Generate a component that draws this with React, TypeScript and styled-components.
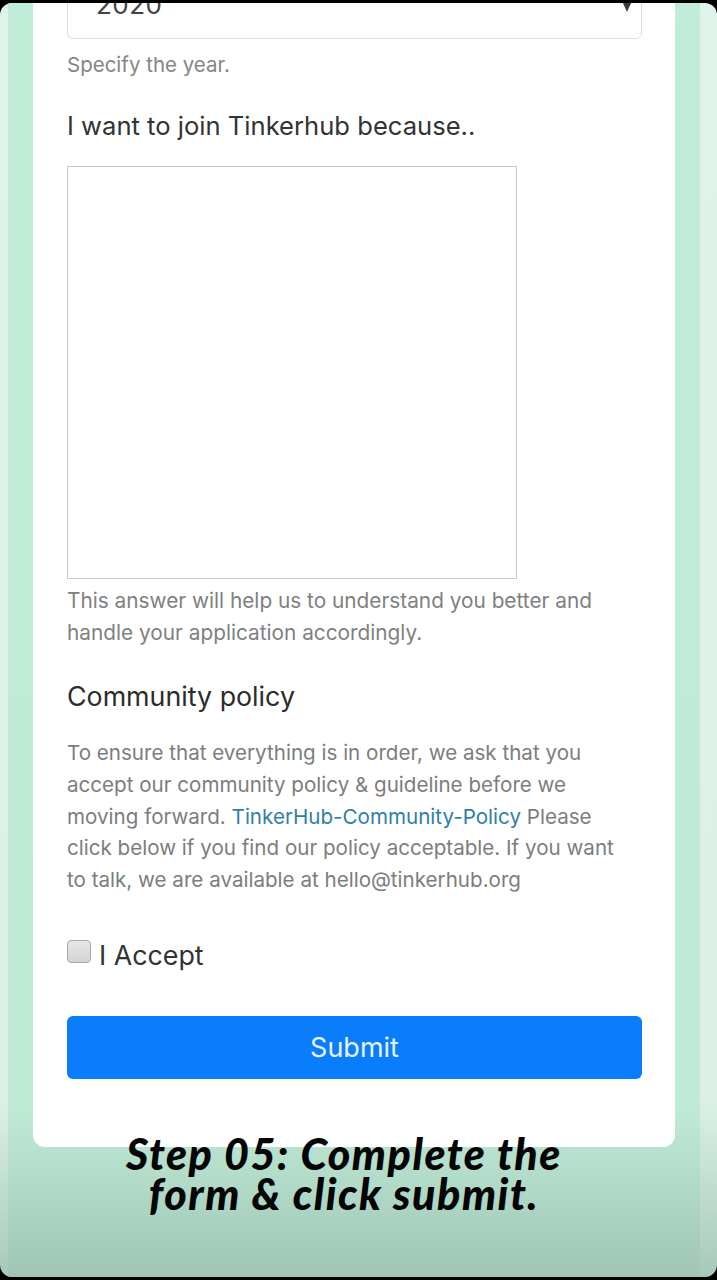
import styled, { createGlobalStyle } from 'styled-components';

const GlobalStyle = createGlobalStyle`
  html, body {
    margin: 0;
    padding: 0;
    background: #000;
  }
  * {
    box-sizing: border-box;
  }
`;

const App = () => {
  return (
    <>
      <GlobalStyle />
      <Screen>
        <Panel>
          <Card>
            <SelectBox>
              <SelectValue>2020</SelectValue>
              <Caret />
            </SelectBox>
            <HelpText>Specify the year.</HelpText>

            <FieldLabel>I want to join Tinkerhub because..</FieldLabel>
            <AnswerArea />
            <HelpText className="multi">
              This answer will help us to understand you better and handle your application accordingly.
            </HelpText>

            <SectionTitle>Community policy</SectionTitle>
            <PolicyText>
              To ensure that everything is in order, we ask that you accept our community policy &amp;
              guideline before we moving forward. <PolicyLink>TinkerHub-Community-Policy</PolicyLink> Please
              click below if you find our policy acceptable. If you want to talk, we are available at
              hello@tinkerhub.org
            </PolicyText>

            <AcceptRow>
              <CheckBox />
              <AcceptLabel>I Accept</AcceptLabel>
            </AcceptRow>

            <SubmitButton>Submit</SubmitButton>
          </Card>

          <StepCaption>
            Step 05: Complete the
            <br />
            form &amp; click submit.
          </StepCaption>
        </Panel>
      </Screen>
    </>
  );
};

export default App;

const Screen = styled.div`
  width: 717px;
  height: 1274px;
  margin-top: 3px;
  overflow: hidden;

  border-radius: 12px;
  background: linear-gradient(to bottom, #def4eb 0%, #dbf1e7 86%, #a6c9ba 100%);
`;

const Panel = styled.div`
  width: 692px;
  height: 100%;
  margin-left: 8px;
  padding: 0 25px;

  display: flex;
  flex-direction: column;

  background: linear-gradient(to bottom, #c1ecd8 0%, #bfead6 87%, #a0c5b5 100%);
`;

const Card = styled.section`
  width: 642px;
  height: 1144px;
  padding: 0 33px 0 34px;

  display: flex;
  flex-direction: column;

  background: #fff;
  border-radius: 0 0 12px 12px;
  font-family: Inter, 'Noto Sans', sans-serif;
`;

const SelectBox = styled.div`
  height: 70px;
  margin-top: -34px;
  padding: 0 9px 0 28px;

  display: flex;
  align-items: center;
  justify-content: space-between;

  border: 1px solid #dedede;
  border-radius: 6px;
`;

const SelectValue = styled.span`
  font-size: 26px;
  color: #444;
  letter-spacing: 0.5px;
`;

const Caret = styled.span`
  width: 0;
  height: 0;
  margin-top: 4px;

  border-left: 5px solid transparent;
  border-right: 5px solid transparent;
  border-top: 11px solid #3a3a3a;
`;

const HelpText = styled.p`
  margin: 10px 0 0;

  font-size: 20.5px;
  line-height: 32px;
  color: #858585;

  &.multi {
    margin-top: 6px;
    font-size: 20.8px;
    color: #808080;
  }
`;

const FieldLabel = styled.h3`
  margin: 30px 0 0;

  font-size: 25.6px;
  font-weight: 400;
  line-height: 30px;
  color: #333;
`;

const AnswerArea = styled.div`
  width: 450px;
  height: 413px;
  margin-top: 25px;

  border: 1px solid #c9c9c9;
`;

const SectionTitle = styled.h3`
  margin: 32px 0 0;

  font-size: 26.8px;
  font-weight: 400;
  line-height: 30px;
  color: #2c2c2c;
`;

const PolicyText = styled.p`
  max-width: 560px;
  margin: 26px 0 0;

  font-size: 20.6px;
  line-height: 31.8px;
  color: #7d7d7d;
`;

const PolicyLink = styled.span`
  color: #2f7fa8;
`;

const AcceptRow = styled.label`
  margin-top: 44px;

  display: flex;
  align-items: center;
  column-gap: 8px;
`;

const CheckBox = styled.span`
  width: 24px;
  height: 23px;
  margin-top: -6px;

  border: 1px solid #a8a8a8;
  border-radius: 4px;
  background: linear-gradient(#e6e6e6, #d4d4d4);
`;

const AcceptLabel = styled.span`
  font-size: 26.8px;
  line-height: 30px;
  color: #333;
`;

const SubmitButton = styled.button`
  width: 575px;
  height: 63px;
  margin-top: 46px;

  border: none;
  border-radius: 6px;
  background: #0a7dfb;

  font-family: Inter, 'Noto Sans', sans-serif;
  font-size: 27px;
  color: #e6f3ff;
`;

const StepCaption = styled.div`
  margin-top: -13px;
  padding-right: 20px;

  font-family: Lato, 'Open Sans', sans-serif;
  font-size: 43px;
  font-weight: 900;
  font-style: italic;
  line-height: 40px;
  letter-spacing: 1.5px;
  text-align: center;
  color: #050505;
`;
